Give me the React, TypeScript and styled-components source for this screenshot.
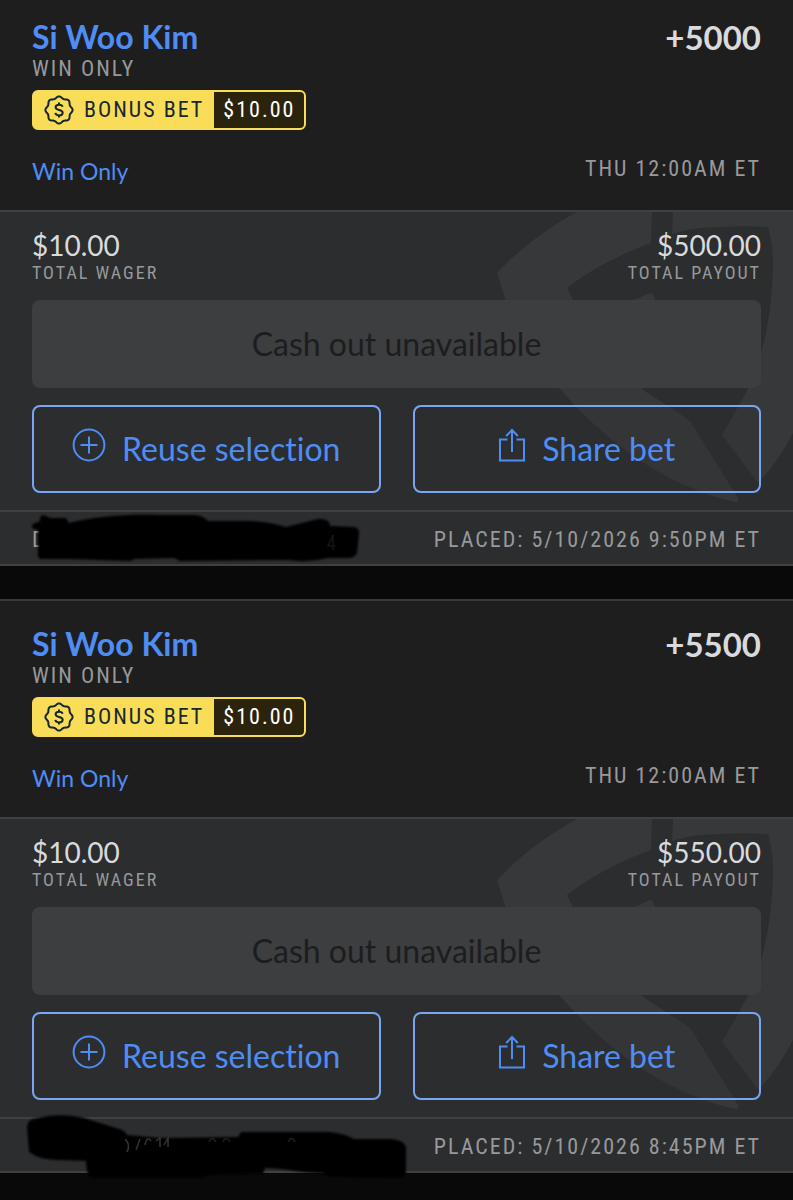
import React from 'react';
import styled, { createGlobalStyle } from 'styled-components';

const SANS = `Lato, 'Open Sans', sans-serif`;
const CONDENSED = `'Roboto Condensed', 'Liberation Sans', sans-serif`;

const GlobalStyle = createGlobalStyle`
  *, *::before, *::after { box-sizing: border-box; }
  body {
    margin: 0;
    background: #090909;
    color: #d8dadd;
    font-family: ${SANS};
    font-variant-ligatures: none;
  }
`;

const BetList = styled.main`
  display: flex;
  flex-direction: column;
  gap: 33px;
  padding-bottom: 27px;
`;

const Card = styled.article`
  background: #2c2d2f;
  border-bottom: 2px solid #3f4042;
`;

const CardHeader = styled.header<{ $first: boolean }>`
  background: #1e1e1e;
  border-top: ${p => (p.$first ? '0' : '2px solid #3a3a3b')};
  padding: ${p => (p.$first ? 17 : 23)}px 32px 25px;
`;

const Row = styled.div`
  display: flex;
  justify-content: space-between;
  align-items: flex-start;
`;

const Player = styled.a`
  color: #4f8df5;
  font-size: 32px;
  font-weight: 700;
  line-height: 40px;
  text-decoration: none;
`;

const Odds = styled.strong`
  font-size: 33px;
  font-weight: 700;
  line-height: 40px;
`;

const Meta = styled.p<{ $small?: boolean }>`
  margin: 0;
  color: #98999c;
  font-family: ${CONDENSED};
  font-size: ${p => (p.$small ? 18 : 22)}px;
  line-height: 24px;
  letter-spacing: 2px;
  white-space: nowrap;
`;

const BonusBadge = styled.div`
  display: inline-flex;
  height: 40px;
  margin: 9px 0 27px;
  border: 2px solid #f9dd58;
  border-radius: 6px;
  overflow: hidden;
  background: #f9dd58;
  font-family: ${CONDENSED};
  font-size: 22px;
  line-height: 36px;
  letter-spacing: 2px;
  vertical-align: top;
`;

const BonusLabel = styled.span`
  display: flex;
  align-items: center;
  gap: 10px;
  padding: 0 10px;
  color: #16262f;
`;

const BonusAmount = styled.span`
  padding: 0 9px;
  background: #2b230c;
  color: #ffffff;
`;

const MarketLink = styled.a`
  color: #4f8df5;
  font-size: 23px;
  line-height: 28px;
  text-decoration: none;
`;

const CardBody = styled.section`
  position: relative;
  overflow: hidden;
  border-top: 2px solid #3f4042;
  border-bottom: 2px solid #3f4042;
  padding: 17px 32px;
`;

const Watermark = styled.svg`
  position: absolute;
  top: 0;
  right: 0;
`;

const BodyContent = styled.div`
  position: relative;
`;

const Figure = styled.div<{ $end?: boolean }>`
  display: flex;
  flex-direction: column;
  align-items: ${p => (p.$end ? 'flex-end' : 'flex-start')};
`;

const Amount = styled.span`
  font-size: 28px;
  line-height: 32px;
`;

const CashOutButton = styled.button`
  display: block;
  width: 100%;
  height: 88px;
  margin: 15px 0 17px;
  padding: 0 0 2px;
  border: 0;
  border-radius: 8px;
  background: #3d3e40;
  color: #1c1d1e;
  font-family: ${SANS};
  font-size: 32px;
`;

const Actions = styled.div`
  display: grid;
  grid-template-columns: 1fr 1fr;
  gap: 32px;
`;

const ActionButton = styled.button`
  display: flex;
  align-items: center;
  justify-content: center;
  gap: 16px;
  height: 88px;
  padding: 0;
  border: 2px solid #79a6f3;
  border-radius: 8px;
  background: rgba(44, 45, 47, 0.3);
  color: #4f8df5;
  font-family: ${SANS};
  font-size: 32px;
  font-variant-ligatures: none;
  line-height: 40px;
  cursor: pointer;

  svg { margin-bottom: 8px; }
`;

const CardFooter = styled.footer`
  position: relative;
  display: flex;
  align-items: center;
  justify-content: space-between;
  height: 52px;
  padding: 4px 32px 0;
`;

const Scribble = styled.svg`
  position: absolute;
  top: 0;
  left: 0;
  overflow: visible;
`;

const Placed = styled(Meta)`
  margin-left: auto;
`;

const sealPath = Array.from({ length: 97 }, (_, i) => {
  const a = (i / 96) * Math.PI * 2;
  const r = 12.7 + 0.9 * Math.cos(8 * a);
  return `${i ? 'L' : 'M'}${(15 + r * Math.cos(a)).toFixed(2)} ${(15 + r * Math.sin(a)).toFixed(2)}`;
}).join('') + 'Z';

const SealIcon = () => (
  <svg width="30" height="30" viewBox="0 0 30 30" fill="none" stroke="currentColor" strokeWidth="2" strokeLinejoin="round" aria-hidden="true">
    <path d={sealPath} />
    <path d="M18.6 11.7C18.2 10.4 16.9 9.7 15.1 9.7C13 9.7 11.6 10.7 11.6 12.3C11.6 16 18.7 13.8 18.7 17.7C18.7 19.4 17.2 20.4 15.1 20.4C13 20.4 11.6 19.5 11.3 17.9M15 7.5V9.7M15 20.4V22.6" />
  </svg>
);

const PlusCircleIcon = () => (
  <svg width="34" height="34" viewBox="0 0 34 34" fill="none" stroke="currentColor" strokeWidth="2" aria-hidden="true">
    <circle cx="17" cy="17" r="15.4" />
    <path d="M17 8.5V25.5M8.5 17H25.5" />
  </svg>
);

const ShareIcon = () => (
  <svg width="28" height="34" viewBox="0 0 28 34" fill="none" stroke="currentColor" strokeWidth="2" aria-hidden="true">
    <path d="M9.5 11.5H2V32.5H26V11.5H18.5M14 24V2M8.2 8L14 2L19.8 8" />
  </svg>
);

const Shield = () => (
  <Watermark width="300" height="298" viewBox="0 0 300 298" fill="#37383a" aria-hidden="true">
    <path d="M84 0C58 14 28 35 4 61C10 80 15 96 22 112C34 140 48 158 67 177C102 217 140 249 187 271C207 280 226 287 243 290Q246 290 245 286L198 210C183 198 164 188 149 177C118 153 94 122 80 88L74 76C100 56 128 42 158 31L159 0Z" />
    <path d="M180 0L179 22C195 17 211 15 227 15C244 14 260 14 275 15C279 28 280 42 280 55C279 85 276 112 269 138C265 152 260 165 255 177L229 223L265 271C279 257 290 240 300 221V0Z" />
    <path d="M140 88C148 86 154 81 159 81L162 88L172 120H110Z" />
  </Watermark>
);

const ScribbleOne = () => (
  <Scribble width="380" height="54" viewBox="0 9 380 54" aria-hidden="true">
    <defs>
      <filter id="soft-one"><feGaussianBlur stdDeviation="0.9" /></filter>
    </defs>
    <path filter="url(#soft-one)" fill="#000" d="M32 25Q31 20 39 19L41 13Q44 11 50 15L66 15L69 20C95 13 130 11 160 12L195 12Q204 13 208 18L252 18Q270 19 286 24L318 16Q330 15 330 23L355 24Q360 26 359 31L357 50Q355 55 348 55L328 55Q308 60 288 57L282 57L180 58L174 55L135 56L130 58L70 56L40 56Q37 54 38 49L38 27Z" />
    <path d="M333 32L328 43H335M333 32V47" fill="none" stroke="#161617" strokeWidth="1.5" />
  </Scribble>
);

const ScribbleTwo = () => (
  <Scribble width="420" height="64" viewBox="0 2 420 64" aria-hidden="true">
    <defs>
      <filter id="soft-two"><feGaussianBlur stdDeviation="0.9" /></filter>
      <filter id="soft-digits"><feGaussianBlur stdDeviation="0.5" /></filter>
    </defs>
    <path filter="url(#soft-two)" fill="#000" d="M27 10Q27 2 38 1C56 -3 70 -2 84 1L116 11Q125 13 127 18L160 21L238 20L241 15L330 15Q346 17 354 22L390 22Q405 23 406 31L406 56Q405 61 396 61L330 60L322 56C300 56 284 51 265 51L263 57L207 58L203 61L92 61Q86 58 86 44L58 43Q40 43 29 35Z" />
    <g fill="none" stroke="#343435" strokeWidth="1.5" filter="url(#soft-digits)">
      <path d="M125 22Q131 28 127 35M140 22L136 33M145 28Q147 18 151 24M156 24L160 21V30M168 30V21L164 28" />
      <path stroke="#1f1f20" d="M209 25Q212 18 216 25M223 25Q226 18 230 25M288 25Q291 18 295 25" />
    </g>
  </Scribble>
);

type Bet = { odds: string; payout: string; placed: string; idHint?: string; scribble: React.ReactNode };

const bets: Bet[] = [
  { odds: '+5000', payout: '$500.00', placed: '5/10/2026 9:50PM ET', idHint: 'D', scribble: <ScribbleOne /> },
  { odds: '+5500', payout: '$550.00', placed: '5/10/2026 8:45PM ET', scribble: <ScribbleTwo /> },
];

const BetCard = ({ bet, first }: { bet: Bet; first: boolean }) => (
  <Card>
    <CardHeader $first={first}>
      <Row>
        <Player href="#player">Si Woo Kim</Player>
        <Odds>{bet.odds}</Odds>
      </Row>
      <Meta>WIN ONLY</Meta>
      <BonusBadge>
        <BonusLabel>
          <SealIcon />
          BONUS BET
        </BonusLabel>
        <BonusAmount>$10.00</BonusAmount>
      </BonusBadge>
      <Row>
        <MarketLink href="#market">Win Only</MarketLink>
        <Meta>THU 12:00AM ET</Meta>
      </Row>
    </CardHeader>
    <CardBody>
      <Shield />
      <BodyContent>
        <Row>
          <Figure>
            <Amount>$10.00</Amount>
            <Meta $small>TOTAL WAGER</Meta>
          </Figure>
          <Figure $end>
            <Amount>{bet.payout}</Amount>
            <Meta $small>TOTAL PAYOUT</Meta>
          </Figure>
        </Row>
        <CashOutButton type="button" disabled>Cash out unavailable</CashOutButton>
        <Actions>
          <ActionButton type="button"><PlusCircleIcon />Reuse selection</ActionButton>
          <ActionButton type="button"><ShareIcon />Share bet</ActionButton>
        </Actions>
      </BodyContent>
    </CardBody>
    <CardFooter>
      {bet.idHint && <Meta>{bet.idHint}</Meta>}
      {bet.scribble}
      <Placed>PLACED: {bet.placed}</Placed>
    </CardFooter>
  </Card>
);

export default function App() {
  return (
    <>
      <GlobalStyle />
      <BetList>
        {bets.map((bet, i) => <BetCard key={bet.placed} bet={bet} first={i === 0} />)}
      </BetList>
    </>
  );
}
